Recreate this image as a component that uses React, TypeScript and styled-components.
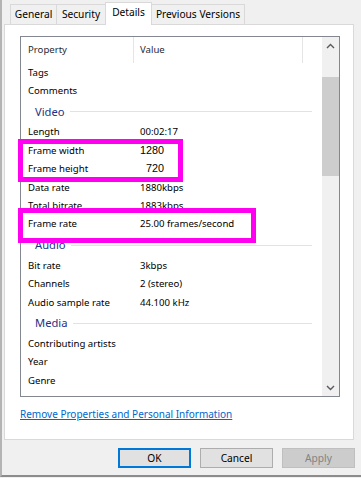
import React from 'react';
import styled, { createGlobalStyle } from 'styled-components';

const GlobalStyle = createGlobalStyle`
  html, body {
    margin: 0;
    padding: 0;
    background: #f0f0f0;
  }
  * {
    box-sizing: border-box;
  }
`;

const Window = styled.div`
  position: relative;
  width: 361px;
  height: 477px;
  background: #f0f0f0;
  border-left: 2px solid #b4b4b4;
  border-bottom: 2px solid #8c8c8c;
  padding: 2px 0 0 2px;
  font-family: 'Noto Sans', 'Open Sans', sans-serif;
  font-size: 9.6px;
  color: #000;
  display: flex;
  flex-direction: column;
`;

const TabStrip = styled.div`
  display: flex;
  align-items: flex-end;
  height: 22px;
  padding-left: 7px;
`;

const Tab = styled.div<{ $active?: boolean; $w: number }>`
  position: relative;
  width: ${p => p.$w}px;
  height: ${p => (p.$active ? 23 : 20)}px;
  margin-bottom: ${p => (p.$active ? -1 : 0)}px;
  margin-left: -1px;
  z-index: ${p => (p.$active ? 2 : 1)};
  background: ${p => (p.$active ? '#ffffff' : '#f0f0f0')};
  border: 1px solid #d9d9d9;
  border-bottom: none;
  display: flex;
  align-items: center;
  justify-content: center;
  padding-bottom: ${p => (p.$active ? 4 : 1)}px;
  font-size: 10.2px;
  white-space: nowrap;
`;

const Panel = styled.div`
  width: 350px;
  height: 416px;
  background: #ffffff;
  border: 1px solid #d9d9d9;
  padding: 11px 0 0 15px;
  display: flex;
  flex-direction: column;
`;

const ListBox = styled.div`
  width: 320px;
  height: 361px;
  border: 1px solid #828790;
  display: flex;
  overflow: hidden;
`;

const ListContent = styled.div`
  flex: 1;
  display: flex;
  flex-direction: column;
  overflow: hidden;
`;

const Header = styled.div`
  display: flex;
  height: 26px;
  flex-shrink: 0;
  color: #1f2a3a;
`;

const HeaderCell = styled.div<{ $w: number; $pad: number }>`
  width: ${p => p.$w}px;
  flex-shrink: 0;
  border-right: 1px solid #e5e5e5;
  display: flex;
  align-items: center;
  padding-left: ${p => p.$pad}px;
  padding-bottom: 1px;
`;

const HeaderFill = styled.div`
  flex: 1;
`;

const Row = styled.div`
  display: flex;
  align-items: center;
  height: 18.4px;
  flex-shrink: 0;
  white-space: nowrap;
`;

const Label = styled.div`
  width: 113px;
  padding-left: 7px;
`;

const Value = styled.div`
  padding-left: 6px;
`;

const EditValue = styled.span`
  display: inline-block;
  width: 24px;
  text-align: right;
  font-family: 'Liberation Sans', Arial, sans-serif;
  font-size: 10.8px;
  color: #000;
`;

const GroupRow = styled.div`
  display: flex;
  align-items: center;
  height: 23px;
  flex-shrink: 0;
  padding-left: 14px;
  padding-right: 10px;
  gap: 5px;
  color: #1e3287;
  font-size: 11.2px;
`;

const GroupLine = styled.div`
  flex: 1;
  height: 1px;
  background: #e2e2e2;
  margin-top: 1px;
`;

const ScrollBar = styled.div`
  width: 17px;
  background: #f0f0f0;
  display: flex;
  flex-direction: column;
`;

const ScrollButton = styled.div`
  height: 17px;
  display: flex;
  align-items: center;
  justify-content: center;
  flex-shrink: 0;
`;

const ScrollTrack = styled.div`
  flex: 1;
  padding: 23px 0 0;
`;

const Thumb = styled.div`
  height: 99px;
  background: #cdcdcd;
`;

const Link = styled.a`
  margin-top: 9px;
  color: #0066cc;
  text-decoration: underline;
  font-size: 10px;
  line-height: 16px;
`;

const ButtonRow = styled.div`
  display: flex;
  justify-content: flex-end;
  gap: 9px;
  margin-top: 8px;
  padding-right: 6px;
`;

const Button = styled.div<{ $kind?: 'default' | 'disabled' }>`
  width: 73px;
  height: 20px;
  display: flex;
  align-items: center;
  justify-content: center;
  font-size: 10.2px;
  background: ${p => (p.$kind === 'disabled' ? '#cccccc' : '#e1e1e1')};
  color: ${p => (p.$kind === 'disabled' ? '#838383' : '#000')};
  border: 1px solid
    ${p => (p.$kind === 'default' ? '#0078d7' : p.$kind === 'disabled' ? '#bfbfbf' : '#adadad')};
  box-shadow: ${p => (p.$kind === 'default' ? 'inset 0 0 0 1px #0078d7' : 'none')};
`;

// magenta annotation frames drawn over the list
const Highlight = styled.div<{ $x: number; $y: number; $w: number; $h: number }>`
  position: absolute;
  left: ${p => p.$x}px;
  top: ${p => p.$y}px;
  width: ${p => p.$w}px;
  height: ${p => p.$h}px;
  border: 5px solid #ff00f0;
  pointer-events: none;
`;

type Item =
  | { kind: 'row'; label: string; value?: string; edited?: boolean }
  | { kind: 'group'; title: string };

const items: Item[] = [
  { kind: 'row', label: 'Tags' },
  { kind: 'row', label: 'Comments' },
  { kind: 'group', title: 'Video' },
  { kind: 'row', label: 'Length', value: '00:02:17' },
  { kind: 'row', label: 'Frame width', value: '1280', edited: true },
  { kind: 'row', label: 'Frame height', value: '720', edited: true },
  { kind: 'row', label: 'Data rate', value: '1880kbps' },
  { kind: 'row', label: 'Total bitrate', value: '1883kbps' },
  { kind: 'row', label: 'Frame rate', value: '25.00 frames/second' },
  { kind: 'group', title: 'Audio' },
  { kind: 'row', label: 'Bit rate', value: '3kbps' },
  { kind: 'row', label: 'Channels', value: '2 (stereo)' },
  { kind: 'row', label: 'Audio sample rate', value: '44.100 kHz' },
  { kind: 'group', title: 'Media' },
  { kind: 'row', label: 'Contributing artists' },
  { kind: 'row', label: 'Year' },
  { kind: 'row', label: 'Genre' },
];

const Chevron = ({ up }: { up?: boolean }) => (
  <svg width="9" height="6" viewBox="0 0 9 6">
    <polyline
      points={up ? '1,5 4.5,1.5 8,5' : '1,1 4.5,4.5 8,1'}
      fill="none"
      stroke="#5a5a5a"
      strokeWidth="1.4"
    />
  </svg>
);

const tabs = [
  { label: 'General', w: 47 },
  { label: 'Security', w: 50 },
  { label: 'Details', w: 47, active: true },
  { label: 'Previous Versions', w: 94 },
];

export default function App() {
  return (
    <>
      <GlobalStyle />
      <Window>
        <TabStrip>
          {tabs.map(t => (
            <Tab key={t.label} $w={t.w} $active={t.active}>
              {t.label}
            </Tab>
          ))}
        </TabStrip>
        <Panel>
          <ListBox>
            <ListContent>
              <Header>
                <HeaderCell $w={113} $pad={7}>Property</HeaderCell>
                <HeaderCell $w={169} $pad={6}>Value</HeaderCell>
                <HeaderFill />
              </Header>
              {items.map((it, i) =>
                it.kind === 'group' ? (
                  <GroupRow key={i}>
                    {it.title}
                    <GroupLine />
                  </GroupRow>
                ) : (
                  <Row key={i}>
                    <Label>{it.label}</Label>
                    <Value>{it.edited ? <EditValue>{it.value}</EditValue> : it.value}</Value>
                  </Row>
                )
              )}
            </ListContent>
            <ScrollBar>
              <ScrollButton>
                <Chevron up />
              </ScrollButton>
              <ScrollTrack>
                <Thumb />
              </ScrollTrack>
              <ScrollButton>
                <Chevron />
              </ScrollButton>
            </ScrollBar>
          </ListBox>
          <Link>Remove Properties and Personal Information</Link>
        </Panel>
        <ButtonRow>
          <Button $kind="default">OK</Button>
          <Button>Cancel</Button>
          <Button $kind="disabled">Apply</Button>
        </ButtonRow>
        <Highlight $x={16} $y={139} $w={165} $h={43} />
        <Highlight $x={16} $y={208} $w={238} $h={35} />
      </Window>
    </>
  );
}
